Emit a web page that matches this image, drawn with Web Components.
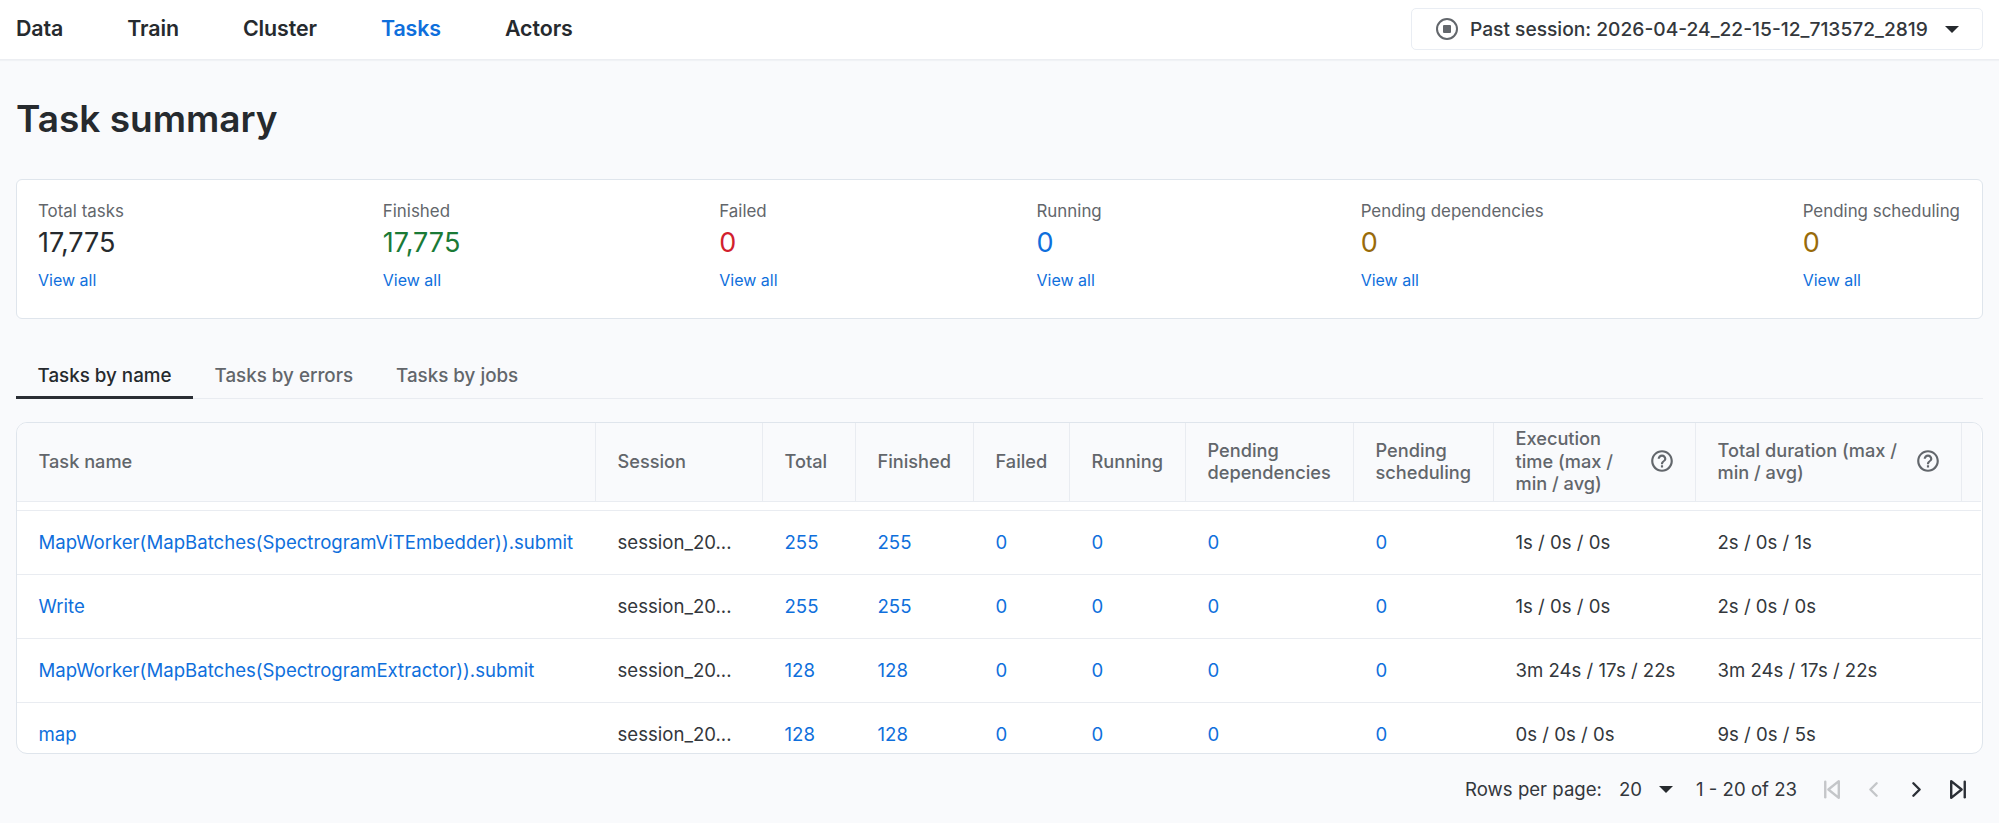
<!DOCTYPE html>
<html>
<head>
<meta charset="utf-8">
<title>Task summary</title>
<style>
  html, body { margin: 0; height: 823px; overflow: hidden; background: #f9fafc; }
  body { font-family: Inter, "Liberation Sans", sans-serif; color: #262a2e; }
  main { display: block; padding: 0 16px; }
</style>
</head>
<body>
<ray-nav active="Tasks" session="Past session: 2026-04-24_22-15-12_713572_2819"></ray-nav>
<main>
  <page-title>Task summary</page-title>
  <summary-card>
    <stat-item label="Total tasks" value="17,775" tone="default"></stat-item>
    <stat-item label="Finished" value="17,775" tone="green"></stat-item>
    <stat-item label="Failed" value="0" tone="red"></stat-item>
    <stat-item label="Running" value="0" tone="blue"></stat-item>
    <stat-item label="Pending dependencies" value="0" tone="amber"></stat-item>
    <stat-item label="Pending scheduling" value="0" tone="amber"></stat-item>
  </summary-card>
  <tab-bar tabs="Tasks by name|Tasks by errors|Tasks by jobs" active="0"></tab-bar>
  <task-table></task-table>
  <table-pager></table-pager>
</main>

<script>
const CARET = `<svg width="14" height="7" viewBox="0 0 14 7"><path d="M0 0h14L7 7z" fill="currentColor"/></svg>`;

class RayNav extends HTMLElement {
  constructor() {
    super();
    this.attachShadow({ mode: "open" });
  }
  connectedCallback() {
    const active = this.getAttribute("active");
    const items = ["Data", "Train", "Cluster", "Tasks", "Actors"];
    this.shadowRoot.innerHTML = `
      <style>
        :host { display: flex; align-items: center; justify-content: space-between; box-sizing: border-box;
          height: 60px; padding: 0 16px 1px; background: #fff; border-bottom: 1px solid #eceef2; box-shadow: 0 1px 1px #f0f2f5; }
        nav { display: flex; gap: 64px; margin-top: -3px; }
        a { font-size: 21.4px; font-weight: 600; color: #262a2e; letter-spacing: -0.1px; }
        a.on { color: #0f6fdc; }
        .session { display: flex; align-items: center; box-sizing: border-box; width: 572px; height: 42px; padding-left: 23px;
          border: 1px solid #e9edf3; border-radius: 5px; font-size: 19.2px; font-weight: 500; color: #33373c; }
        .session svg.stop { margin-right: 11px; }
        .session span { flex: 1; white-space: nowrap; }
        .session svg.caret { margin-right: 23px; color: #262a2e; }
      </style>
      <nav>${items.map((i) => `<a class="${i === active ? "on" : ""}">${i}</a>`).join("")}</nav>
      <div class="session">
        <svg class="stop" width="24" height="24" viewBox="0 0 24 24"><circle cx="12" cy="12" r="10" fill="none" stroke="#63676c" stroke-width="2"/><rect x="8" y="8" width="8" height="8" rx="1" fill="#63676c"/></svg>
        <span>${this.getAttribute("session")}</span>
        <svg class="caret" width="14" height="7" viewBox="0 0 14 7"><path d="M0 0h14L7 7z" fill="currentColor"/></svg>
      </div>
    `;
  }
}
customElements.define("ray-nav", RayNav);

class PageTitle extends HTMLElement {
  constructor() {
    super();
    this.attachShadow({ mode: "open" }).innerHTML = `
      <style>
        :host { display: block; padding: 36.5px 0 38px 0; font-size: 37px; line-height: 44px; font-weight: 600; color: #262a2e; }
      </style>
      <slot></slot>
    `;
  }
}
customElements.define("page-title", PageTitle);

class SummaryCard extends HTMLElement {
  constructor() {
    super();
    this.attachShadow({ mode: "open" }).innerHTML = `
      <style>
        :host { display: flex; justify-content: space-between; box-sizing: border-box; height: 140px; padding: 20.5px 22px 0 21px;
          background: #fff; border: 1.5px solid #dfe5ec; border-radius: 6px; }
      </style>
      <slot></slot>
    `;
  }
}
customElements.define("summary-card", SummaryCard);

class StatItem extends HTMLElement {
  constructor() {
    super();
    this.attachShadow({ mode: "open" });
  }
  connectedCallback() {
    const tones = { default: "#262a2e", green: "#1a7a36", red: "#d21f2e", blue: "#0f6fdc", amber: "#996b0a" };
    this.shadowRoot.innerHTML = `
      <style>
        :host { display: block; }
        .label { font-size: 16.9px; line-height: 22px; color: #62666b; white-space: nowrap; }
        .value { font-size: 27px; line-height: 34px; margin-top: 4px; color: ${tones[this.getAttribute("tone")]}; }
        .link { font-size: 16px; line-height: 22px; margin-top: 9px; color: #0f6fdc; }
      </style>
      <div class="label">${this.getAttribute("label")}</div>
      <div class="value">${this.getAttribute("value")}</div>
      <div class="link">View all</div>
    `;
  }
}
customElements.define("stat-item", StatItem);

class TabBar extends HTMLElement {
  constructor() {
    super();
    this.attachShadow({ mode: "open" });
  }
  connectedCallback() {
    const active = Number(this.getAttribute("active"));
    const tabs = this.getAttribute("tabs").split("|");
    this.shadowRoot.innerHTML = `
      <style>
        :host { display: flex; margin-top: 36.5px; height: 43px; border-bottom: 1px solid #e9ecf1; }
        .tab { box-sizing: border-box; height: 44px; padding: 0 21.5px; display: flex; align-items: center; padding-bottom: 4px;
          font-size: 18.8px; font-weight: 500; color: #62666b; white-space: nowrap; }
        .tab.on { color: #262a2e; border-bottom: 3px solid #2a2e34; padding-bottom: 1px; }
      </style>
      ${tabs.map((t, i) => `<div class="tab ${i === active ? "on" : ""}">${t}</div>`).join("")}
    `;
  }
}
customElements.define("tab-bar", TabBar);

const HELP = `<svg width="26" height="26" viewBox="0 0 24 24" fill="#63676c"><path d="M11 18h2v-2h-2v2zm1-16C6.48 2 2 6.48 2 12s4.48 10 10 10 10-4.48 10-10S17.52 2 12 2zm0 18c-4.41 0-8-3.59-8-8s3.59-8 8-8 8 3.59 8 8-3.59 8-8 8zm0-14c-2.21 0-4 1.79-4 4h2c0-1.1.9-2 2-2s2 .9 2 2c0 2-3 1.75-3 5h2c0-2.25 3-2.5 3-5 0-2.21-1.79-4-4-4z"/></svg>`;

class TaskTable extends HTMLElement {
  constructor() {
    super();
    this.attachShadow({ mode: "open" });
  }
  connectedCallback() {
    const widths = [579, 167, 93, 118, 96, 116, 168, 140, 202, 266, 19];
    const heads = ["Task name", "Session", "Total", "Finished", "Failed", "Running", "Pending dependencies", "Pending scheduling"];
    const rows = [
      ["MapWorker(MapBatches(SpectrogramViTEmbedder)).submit", "255", "1s / 0s / 0s", "2s / 0s / 1s"],
      ["Write", "255", "1s / 0s / 0s", "2s / 0s / 0s"],
      ["MapWorker(MapBatches(SpectrogramExtractor)).submit", "128", "3m 24s / 17s / 22s", "3m 24s / 17s / 22s"],
      ["map", "128", "0s / 0s / 0s", "9s / 0s / 5s"],
    ];
    this.shadowRoot.innerHTML = `
      <style>
        :host { display: block; box-sizing: border-box; height: 332px; margin-top: 23px; overflow: hidden;
          background: #fff; border: 1.5px solid #dfe5ec; border-radius: 11px; }
        table { border-collapse: separate; border-spacing: 0; table-layout: fixed; width: 1964px; font-size: 18.6px; }
        th { box-sizing: border-box; height: 79px; padding: 0 21.5px 2px; background: #f9fafc; text-align: left; font-weight: 500;
          font-size: 18.2px; line-height: 22.5px; color: #62666b; border-right: 1px solid #e9ecf1; border-bottom: 1.5px solid #e9ecf1; }
        th:last-child { border-right: none; }
        th .help { display: flex; align-items: center; justify-content: space-between; gap: 8px; margin-right: -1px; }
        th .help svg { flex: none; }
        .gap td { height: 9px; padding: 0; border-bottom: 1.5px solid #e9ecf1; }
        td { box-sizing: border-box; height: 64px; padding: 0 21.5px 2px; white-space: nowrap; color: #33373c;
          border-bottom: 1.5px solid #e9ecf1; }
        td.l { color: #0f6fdc; }
        td:first-child { padding-right: 0; }
      </style>
      <table>
        <colgroup>${widths.map((w) => `<col style="width:${w}px">`).join("")}</colgroup>
        <thead><tr>
          ${heads.map((h) => `<th>${h}</th>`).join("")}
          <th><div class="help"><span>Execution time (max / min / avg)</span>${HELP}</div></th>
          <th><div class="help"><span>Total duration (max / min / avg)</span>${HELP}</div></th>
          <th></th>
        </tr></thead>
        <tbody>
          <tr class="gap"><td colspan="11"></td></tr>
          ${rows.map((r) => `<tr>
            <td class="l">${r[0]}</td>
            <td>session_20...</td>
            <td class="l">${r[1]}</td>
            <td class="l">${r[1]}</td>
            <td class="l">0</td>
            <td class="l">0</td>
            <td class="l">0</td>
            <td class="l">0</td>
            <td>${r[2]}</td>
            <td>${r[3]}</td>
            <td></td>
          </tr>`).join("")}
        </tbody>
      </table>
    `;
  }
}
customElements.define("task-table", TaskTable);

class TablePager extends HTMLElement {
  constructor() {
    super();
    this.attachShadow({ mode: "open" }).innerHTML = `
      <style>
        :host { display: flex; align-items: center; justify-content: flex-end; height: 70px; padding-right: 3px;
          font-size: 18.6px; color: #33373c; white-space: nowrap; }
        .rows { margin-left: 17px; }
        .caret { margin-left: 17px; margin-right: 23px; display: flex; color: #262a2e; }
        .btns { display: flex; margin-left: 13px; }
        .btn { width: 42.5px; display: flex; justify-content: center; color: #2b2f36; }
        .off { color: #c4c6c9; }
        svg.i { fill: none; stroke: currentColor; stroke-width: 2.3; stroke-linejoin: round; stroke-linecap: round; }
      </style>
      <span>Rows per page:</span>
      <span class="rows">20</span>
      <span class="caret">${CARET}</span>
      <span>1 - 20 of 23</span>
      <div class="btns">
        <span class="btn off"><svg class="i" width="25" height="25" viewBox="0 0 24 24"><polygon points="19 20 9 12 19 4"/><line x1="6" y1="19.5" x2="6" y2="4.5"/></svg></span>
        <span class="btn off"><svg class="i" width="25" height="25" viewBox="0 0 24 24"><polyline points="15 18 9 12 15 6"/></svg></span>
        <span class="btn"><svg class="i" width="25" height="25" viewBox="0 0 24 24"><polyline points="9 18 15 12 9 6"/></svg></span>
        <span class="btn"><svg class="i" width="25" height="25" viewBox="0 0 24 24"><polygon points="5 4 15 12 5 20"/><line x1="18" y1="4.5" x2="18" y2="19.5"/></svg></span>
      </div>
    `;
  }
}
customElements.define("table-pager", TablePager);
</script>
</body>
</html>
